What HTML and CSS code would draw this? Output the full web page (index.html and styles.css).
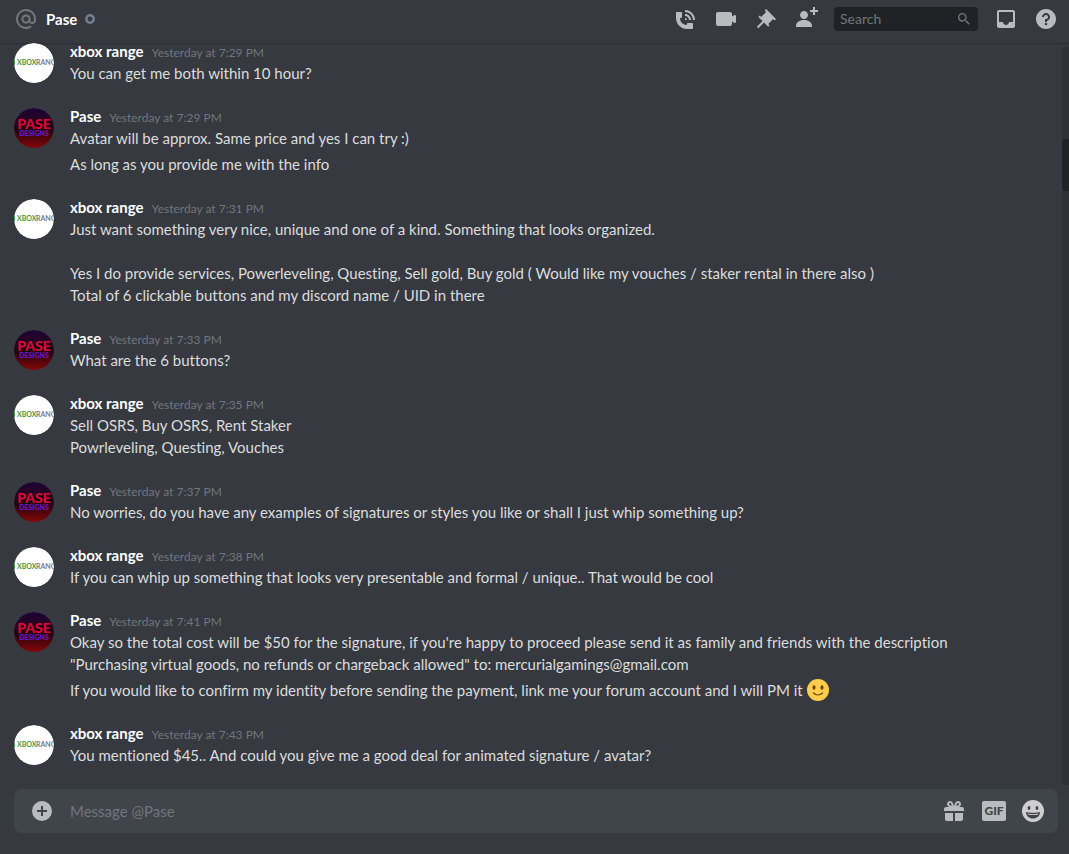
FILE: index.html
```html
<!DOCTYPE html>
<html lang="en">
<head>
<meta charset="utf-8">
<title>Pase</title>
<link rel="stylesheet" href="styles.css">
</head>
<body>
<svg class="sprite" aria-hidden="true">
  <defs>
    <linearGradient id="night" x1="0" y1="0" x2="0" y2="1">
      <stop offset="0" stop-color="#1c0438"/><stop offset=".3" stop-color="#26031f"/><stop offset=".55" stop-color="#24040f"/><stop offset="1" stop-color="#840606"/>
    </linearGradient>
    <clipPath id="round"><circle cx="20" cy="20" r="20"/></clipPath>
  </defs>
  <symbol id="avatar-xbox" viewBox="0 0 40 40">
    <g clip-path="url(#round)" font-size="7">
      <circle cx="20" cy="20" r="20" fill="#fff"/>
      <path d="M0 17v5" stroke="#3f9a44" stroke-width="2"/>
      <text x="3" y="22" fill="#3f9a44" class="avatar-brand avatar-bold">XBOX</text>
      <text x="22" y="22" fill="#7b7b7b" class="avatar-brand avatar-bold">RANG</text>
    </g>
  </symbol>
  <symbol id="avatar-pase" viewBox="0 0 40 40">
    <g clip-path="url(#round)" text-anchor="middle">
      <circle cx="20" cy="20" r="20" fill="url(#night)"/>
      <text x="20" y="21" font-size="14" fill="#dc0a38" class="avatar-brand avatar-black">PASE</text>
      <text x="20" y="28" font-size="7" fill="#6a16d8" class="avatar-brand avatar-black">DESIGNS</text>
    </g>
  </symbol>
</svg>

<main class="chat">
  <header class="topbar">
    <svg class="icon icon-dim" viewBox="0 0 24 24" aria-hidden="true"><path d="M12 2C6.486 2 2 6.486 2 12C2 17.515 6.486 22 12 22C14.039 22 15.993 21.398 17.652 20.259L16.521 18.611C15.195 19.519 13.633 20 12 20C7.589 20 4 16.411 4 12C4 7.589 7.589 4 12 4C16.411 4 20 7.589 20 12V12.782C20 14.17 19.402 15 18.4 15L18.398 15.018C18.338 15.005 18.273 15 18.209 15H18C17.437 15 16.6 14.182 16.6 13.631V12C16.6 9.464 14.537 7.4 12 7.4C9.463 7.4 7.4 9.463 7.4 12C7.4 14.537 9.463 16.6 12 16.6C13.234 16.6 14.35 16.106 15.177 15.313C15.826 16.269 16.93 17 18 17L18.002 16.981C18.064 16.994 18.129 17 18.195 17H18.4C20.552 17 22 15.306 22 12.782V12C22 6.486 17.514 2 12 2ZM12 14.599C10.566 14.599 9.4 13.433 9.4 11.999C9.4 10.566 10.566 9.399 12 9.399C13.434 9.399 14.6 10.566 14.6 11.999C14.6 13.433 13.434 14.599 12 14.599Z"/></svg>
    <h1 class="title">Pase</h1>
    <svg class="status" viewBox="0 0 10 10" role="img" aria-label="Offline"><circle cx="5" cy="5" r="3.700" fill="none" stroke="#747f8d" stroke-width="2.500"/></svg>
    <nav class="tools" aria-label="Conversation tools">
      <button class="tool" aria-label="Start voice call"><svg class="icon" viewBox="0 0 24 24"><path d="M11 5V3C16.515 3 21 7.486 21 13H19C19 8.589 15.411 5 11 5ZM17 13H15C15 10.795 13.206 9 11 9V7C14.309 7 17 9.691 17 13ZM11 11V13H13C13 11.896 12.105 11 11 11ZM14 16H18C18.553 16 19 16.447 19 17V21C19 21.553 18.553 22 18 22H13C6.925 22 2 17.075 2 11V6C2 5.447 2.448 5 3 5H7C7.553 5 8 5.447 8 6V10C8 10.553 7.553 11 7 11H6C6.063 14.938 9 18 13 18V17C13 16.447 13.447 16 14 16Z"/></svg></button>
      <button class="tool" aria-label="Start video call"><svg class="icon" viewBox="0 0 24 24"><path d="M21.526 8.149C21.231 7.966 20.862 7.951 20.553 8.105L18 9.382V7C18 5.897 17.103 5 16 5H4C2.897 5 2 5.897 2 7V17C2 18.104 2.897 19 4 19H16C17.103 19 18 18.104 18 17V14.618L20.553 15.894C20.694 15.965 20.847 16 21 16C21.183 16 21.365 15.949 21.526 15.851C21.82 15.668 22 15.347 22 15V9C22 8.653 21.82 8.332 21.526 8.149Z"/></svg></button>
      <button class="tool" aria-label="Pinned messages"><svg class="icon" viewBox="0 0 24 24"><path d="M22 12L12.101 2.101L10.686 3.514L12.101 4.929L7.151 9.878V9.88L5.736 8.465L4.322 9.88L8.565 14.122L2.908 19.778L4.322 21.192L9.979 15.536L14.222 19.778L15.636 18.364L14.222 16.95L19.171 12H19.172L20.586 13.414L22 12Z"/></svg></button>
      <button class="tool" aria-label="Add friends to DM"><svg class="icon" viewBox="0 0 24 24"><path d="M21 3H24V5H21V8H19V5H16V3H19V0H21V3ZM10 12C12.205 12 14 10.205 14 8C14 5.795 12.205 4 10 4C7.795 4 6 5.795 6 8C6 10.205 7.795 12 10 12ZM10 13C5.289 13 2 15.467 2 19V20H18V19C18 15.467 14.711 13 10 13Z"/></svg></button>
      <label class="search">
        <input class="search-input" type="text" placeholder="Search" aria-label="Search">
        <svg class="icon-small" viewBox="0 0 24 24" aria-hidden="true"><path d="M15.5 14h-.79l-.28-.27A6.471 6.471 0 0 0 16 9.5 6.5 6.5 0 1 0 9.5 16c1.61 0 3.09-.59 4.23-1.57l.27.28v.79l5 4.99L20.49 19l-4.99-5zm-6 0C7.01 14 5 11.99 5 9.5S7.01 5 9.5 5 14 7.01 14 9.5 11.99 14 9.5 14z"/></svg>
      </label>
      <button class="tool" aria-label="Inbox"><svg class="icon" viewBox="0 0 24 24"><path d="M19 3H4.99C3.88 3 3.01 3.89 3.01 5L3 19C3 20.1 3.88 21 4.99 21H19C20.1 21 21 20.1 21 19V5C21 3.89 20.1 3 19 3ZM19 15H15C15 16.66 13.65 18 12 18C10.35 18 9 16.66 9 15H4.99V5H19V15Z"/></svg></button>
      <button class="tool" aria-label="Help"><svg class="icon" viewBox="0 0 24 24"><path d="M12 2C6.486 2 2 6.487 2 12C2 17.515 6.486 22 12 22C17.514 22 22 17.515 22 12C22 6.487 17.514 2 12 2ZM12 18.25C11.31 18.25 10.75 17.691 10.75 17C10.75 16.31 11.31 15.75 12 15.75C12.69 15.75 13.25 16.31 13.25 17C13.25 17.691 12.69 18.25 12 18.25ZM13 13.875V15H11V12H12C13.104 12 14 11.103 14 10C14 8.896 13.104 8 12 8C10.896 8 10 8.896 10 10H8C8 7.795 9.795 6 12 6C14.205 6 16 7.795 16 10C16 11.861 14.723 13.429 13 13.875Z"/></svg></button>
    </nav>
  </header>

  <div class="feed">
    <div class="messages">
      <article class="message">
        <svg class="avatar" aria-hidden="true"><use href="#avatar-xbox"/></svg>
        <div class="body">
          <h2 class="byline"><span class="author">xbox range</span><time class="time">Yesterday at 7:29 PM</time></h2>
          <p class="text">You can get me both within 10 hour?</p>
        </div>
      </article>
      <article class="message">
        <svg class="avatar" aria-hidden="true"><use href="#avatar-pase"/></svg>
        <div class="body">
          <h2 class="byline"><span class="author">Pase</span><time class="time">Yesterday at 7:29 PM</time></h2>
          <p class="text">Avatar will be approx. Same price and yes I can try :)</p>
          <p class="text">As long as you provide me with the info</p>
        </div>
      </article>
      <article class="message">
        <svg class="avatar" aria-hidden="true"><use href="#avatar-xbox"/></svg>
        <div class="body">
          <h2 class="byline"><span class="author">xbox range</span><time class="time">Yesterday at 7:31 PM</time></h2>
          <p class="text">Just want something very nice, unique and one of a kind. Something that looks organized.<br><br>Yes I do provide services, Powerleveling, Questing, Sell gold, Buy gold ( Would like my vouches / staker rental in there also )<br>Total of 6 clickable buttons and my discord name / UID in there</p>
        </div>
      </article>
      <article class="message">
        <svg class="avatar" aria-hidden="true"><use href="#avatar-pase"/></svg>
        <div class="body">
          <h2 class="byline"><span class="author">Pase</span><time class="time">Yesterday at 7:33 PM</time></h2>
          <p class="text">What are the 6 buttons?</p>
        </div>
      </article>
      <article class="message">
        <svg class="avatar" aria-hidden="true"><use href="#avatar-xbox"/></svg>
        <div class="body">
          <h2 class="byline"><span class="author">xbox range</span><time class="time">Yesterday at 7:35 PM</time></h2>
          <p class="text">Sell OSRS, Buy OSRS, Rent Staker<br>Powrleveling, Questing, Vouches</p>
        </div>
      </article>
      <article class="message">
        <svg class="avatar" aria-hidden="true"><use href="#avatar-pase"/></svg>
        <div class="body">
          <h2 class="byline"><span class="author">Pase</span><time class="time">Yesterday at 7:37 PM</time></h2>
          <p class="text">No worries, do you have any examples of signatures or styles you like or shall I just whip something up?</p>
        </div>
      </article>
      <article class="message">
        <svg class="avatar" aria-hidden="true"><use href="#avatar-xbox"/></svg>
        <div class="body">
          <h2 class="byline"><span class="author">xbox range</span><time class="time">Yesterday at 7:38 PM</time></h2>
          <p class="text">If you can whip up something that looks very presentable and formal / unique.. That would be cool</p>
        </div>
      </article>
      <article class="message">
        <svg class="avatar" aria-hidden="true"><use href="#avatar-pase"/></svg>
        <div class="body">
          <h2 class="byline"><span class="author">Pase</span><time class="time">Yesterday at 7:41 PM</time></h2>
          <p class="text">Okay so the total cost will be $50 for the signature, if you're happy to proceed please send it as family and friends with the description<br>"Purchasing virtual goods, no refunds or chargeback allowed" to: mercurialgamings@gmail.com</p>
          <p class="text">If you would like to confirm my identity before sending the payment, link me your forum account and I will PM it <svg class="emoji" viewBox="0 0 22 22" role="img" aria-label="slightly smiling face"><circle cx="11" cy="11" r="11" fill="#ffcc4d"/><ellipse cx="7" cy="8.5" rx="1.5" ry="2.2" fill="#664500"/><ellipse cx="15" cy="8.5" rx="1.5" ry="2.2" fill="#664500"/><path d="M6.5 14c2.600 2.400 6.400 2.400 9 0" fill="none" stroke="#664500" stroke-width="1.300" stroke-linecap="round"/></svg></p>
        </div>
      </article>
      <article class="message">
        <svg class="avatar" aria-hidden="true"><use href="#avatar-xbox"/></svg>
        <div class="body">
          <h2 class="byline"><span class="author">xbox range</span><time class="time">Yesterday at 7:43 PM</time></h2>
          <p class="text">You mentioned $45.. And could you give me a good deal for animated signature / avatar?</p>
        </div>
      </article>
    </div>
    <div class="track" aria-hidden="true"><div class="thumb"></div></div>
  </div>

  <form class="composer">
    <button class="tool" type="button" aria-label="Attach a file"><svg class="icon" viewBox="0 0 24 24"><path d="M12 2a10 10 0 1 0 0 20a10 10 0 0 0 0-20ZM17 13h-4v4h-2v-4H7v-2h4V7h2v4h4Z"/></svg></button>
    <input class="composer-input" type="text" placeholder="Message @Pase" aria-label="Message @Pase">
    <button class="tool" type="button" aria-label="Send a gift"><svg class="icon" viewBox="0 0 24 24"><path fill-rule="evenodd" d="M16.886 7.999H20C21.104 7.999 22 8.896 22 9.999V11.999H2V9.999C2 8.896 2.897 7.999 4 7.999H7.114C6.663 7.764 6.236 7.477 5.879 7.121C4.709 5.951 4.709 4.048 5.879 2.879C7.012 1.746 8.986 1.746 10.121 2.877C11.758 4.514 11.979 7.595 11.998 7.941L11.990 7.999H12.010L12.002 7.941C12.022 7.595 12.242 4.514 13.879 2.877C15.014 1.745 16.986 1.746 18.121 2.877C19.290 4.049 19.290 5.952 18.121 7.121C17.764 7.477 17.337 7.764 16.886 7.999ZM7.293 5.707C6.903 5.316 6.903 4.682 7.293 4.292C7.481 4.103 7.732 4 8 4C8.268 4 8.519 4.103 8.707 4.292C9.297 4.882 9.641 5.940 9.825 6.822C8.945 6.639 7.879 6.293 7.293 5.707ZM14.174 6.824C14.359 5.941 14.702 4.883 15.293 4.293C15.481 4.103 15.732 4 16 4C16.268 4 16.519 4.103 16.706 4.291C17.096 4.682 17.097 5.316 16.707 5.707C16.116 6.298 15.057 6.642 14.174 6.824ZM3 13.999H11V21.999H5C3.896 21.999 3 21.103 3 19.999V13.999ZM13 13.999V21.999H19C20.104 21.999 21 21.103 21 19.999V13.999H13Z"/></svg></button>
    <button class="tool gif" type="button">GIF</button>
    <button class="tool" type="button" aria-label="Pick an emoji"><svg class="emoji-icon" viewBox="0 0 22 22"><circle cx="11" cy="11" r="11" fill="#cfcfd0"/><g fill="#40444b"><ellipse cx="7" cy="8" rx="1.400" ry="2"/><ellipse cx="15" cy="8" rx="1.400" ry="2"/><path d="M4 12c2 1 12 1 14 0c0 4-3 6.500-7 6.500S4 16 4 12Z"/></g><path d="M5.300 13.500c3 1 8.400 1 11.400 0c-.4 2-10.800 2-11.400 0Z" fill="#e4e4e4"/></svg></button>
  </form>
</main>
</body>
</html>
```
FILE: styles.css
```css
* {
  box-sizing: border-box;
}

body {
  margin: 0;
  background: #36393f;
  color: #dcddde;
  font-family: Lato, "Noto Sans", sans-serif;
  font-size: 15px;
  font-variant-ligatures: none;
  line-height: 22px;
}

button,
input {
  padding: 0;
  border: 0;
  background: none;
  color: inherit;
  font: inherit;
}

.sprite {
  position: absolute;
  width: 0;
  height: 0;
}

.chat {
  display: flex;
  flex-direction: column;
  height: 100vh;
  padding-bottom: 21px;
}

.topbar {
  display: flex;
  flex: none;
  align-items: center;
  padding: 7px 11px 12px 14px;
  height: 43px;
  box-shadow: 0 1px 0 #2c2f34, 0 2px 0 #33363c;
}

.icon {
  display: block;
  width: 24px;
  height: 24px;
  fill: #b9bbbe;
}

.icon-dim {
  fill: #72767d;
}

.title {
  margin: 0 8px;
  color: #fff;
  font-size: 15px;
  font-weight: 700;
}

.status {
  width: 10px;
  height: 10px;
}

.tools {
  display: flex;
  align-items: center;
  gap: 16px;
  margin-left: auto;
}

.tool {
  display: block;
  flex: none;
  cursor: pointer;
}

.search {
  display: flex;
  align-items: center;
  width: 144px;
  height: 24px;
  padding: 0 6px;
  border-radius: 4px;
  background: #202225;
}

.search-input {
  flex: 1;
  min-width: 0;
  font-size: 14px;
}

.search-input::placeholder {
  color: #72767d;
  opacity: 1;
}

.icon-small {
  width: 16px;
  height: 16px;
  fill: #72767d;
}

.feed {
  display: flex;
  flex: 1;
  min-height: 0;
}

.messages {
  display: flex;
  flex: 1;
  flex-direction: column;
  justify-content: flex-end;
  gap: 21px;
  min-width: 0;
  padding: 0 14px 23px;
}

.message {
  display: flex;
  gap: 16px;
}

.avatar {
  flex: none;
  width: 40px;
  height: 40px;
  margin-top: 3px;
}

.avatar-brand {
  font-family: Lato, sans-serif;
}

.avatar-bold {
  font-weight: 700;
}

.avatar-black {
  font-weight: 900;
}

.byline {
  display: flex;
  gap: 8px;
  align-items: baseline;
  margin: 0;
  font-size: 15px;
}

.author {
  color: #fff;
  font-weight: 700;
}

.time {
  color: #72767d;
  font-size: 12px;
  font-weight: 400;
  line-height: 16px;
}

.text {
  margin: 0;
}

.text + .text {
  margin-top: 4px;
}

.emoji {
  width: 22px;
  height: 22px;
  vertical-align: top;
}

.track {
  width: 7px;
  margin: 4px 0;
  padding-top: 92px;
  border-radius: 4px 0 0 4px;
  background: #2f3136;
}

.thumb {
  height: 52px;
  border-radius: 4px 0 0 4px;
  background: #202225;
}

.composer {
  display: flex;
  flex: none;
  align-items: center;
  gap: 16px;
  height: 44px;
  margin: 0 11px 0 14px;
  padding: 0 14px 0 16px;
  border-radius: 8px;
  background: #40444b;
}

.composer-input {
  flex: 1;
  min-width: 0;
}

.composer-input::placeholder {
  color: #72767d;
  opacity: 1;
}

.gif {
  width: 24px;
  height: 20px;
  border-radius: 2px;
  background: #b9bbbe;
  color: #40444b;
  font-size: 12px;
  font-weight: 900;
  line-height: 20px;
}

.emoji-icon {
  display: block;
  width: 22px;
  height: 22px;
}
```
